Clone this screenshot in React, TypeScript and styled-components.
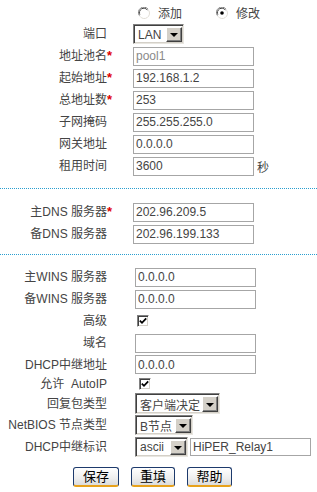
import { createGlobalStyle } from 'styled-components';
import styled from 'styled-components';

const GlobalStyle = createGlobalStyle`
  body {
    margin: 0;
    background: #fff;
    font-family: 'Liberation Sans', 'Noto Sans CJK SC', sans-serif;
    font-size: 12px;
    color: #444;
  }
`;

const Page = styled.div`
  width: 317px;
  padding-top: 2px;
`;

const Section = styled.div<{ $pt?: number }>`
  padding-top: ${(p) => p.$pt ?? 0}px;
`;

const Divider = styled.div<{ $mt: number }>`
  margin-top: ${(p) => p.$mt}px;
  border-top: 1px dotted #2a9fd0;
`;

const Row = styled.div<{ $h?: number; $mark?: number }>`
  display: grid;
  grid-template-columns: 107px ${(p) => p.$mark ?? 26}px auto;
  align-items: center;
  height: ${(p) => p.$h ?? 22}px;
`;

const Label = styled.div`
  text-align: right;
  white-space: nowrap;
  color: #444;
  line-height: 14px;
`;

const Mark = styled.span`
  color: #e00000;
  font-weight: bold;
  font-size: 13px;
  line-height: 12px;
  align-self: center;
`;

const Control = styled.div<{ $ml?: number }>`
  display: flex;
  align-items: center;
  gap: 3px;
  margin-left: ${(p) => p.$ml ?? 0}px;
`;

const TextBox = styled.input<{ $h?: number; $muted?: boolean }>`
  box-sizing: border-box;
  width: 121px;
  height: ${(p) => p.$h ?? 19}px;
  margin: 0;
  padding: 0 2px;
  border: 1px solid #a6a6a6;
  font-family: 'Liberation Sans', 'Noto Sans CJK SC', sans-serif;
  font-size: 12px;
  color: ${(p) => (p.$muted ? '#8a8a8a' : '#444')};
  outline: none;
`;

const Unit = styled.span`
  color: #444;
`;

const RadioRow = styled.div`
  display: flex;
  align-items: center;
  height: 21px;
  padding-left: 138px;
`;

const RadioItem = styled.label<{ $w: number }>`
  display: flex;
  align-items: center;
  gap: 8px;
  width: ${(p) => p.$w}px;
  color: #444;
`;

const Select = styled.div<{ $w: number; $h?: number }>`
  box-sizing: border-box;
  display: flex;
  align-items: stretch;
  width: ${(p) => p.$w}px;
  height: ${(p) => p.$h ?? 20}px;
  border-top: 1px solid #808080;
  border-left: 1px solid #808080;
  border-right: 1px solid #e8e6e0;
  border-bottom: 1px solid #e8e6e0;
  box-shadow: inset 1px 1px 0 #404040, inset -1px -1px 0 #d4d0c8;
  background: #fff;
  padding: 2px 1px 1px 2px;
`;

const SelectText = styled.span`
  flex: 1;
  display: flex;
  align-items: center;
  padding-left: 2px;
  color: #444;
  font-size: 12px;
  white-space: nowrap;
  overflow: hidden;
`;

const SelectArrow = styled.span`
  box-sizing: border-box;
  display: flex;
  align-items: center;
  justify-content: center;
  width: 16px;
  background: #d4d0c8;
  border-top: 1px solid #fff;
  border-left: 1px solid #fff;
  border-right: 1px solid #404040;
  border-bottom: 1px solid #404040;
  box-shadow: inset -1px -1px 0 #808080;

  &::after {
    content: '';
    border-left: 4px solid transparent;
    border-right: 4px solid transparent;
    border-top: 4px solid #000;
    margin-top: 1px;
  }
`;

const CheckBox = styled.span`
  box-sizing: border-box;
  display: inline-flex;
  align-items: center;
  justify-content: center;
  width: 12px;
  height: 12px;
  border-top: 1px solid #808080;
  border-left: 1px solid #808080;
  border-right: 1px solid #fff;
  border-bottom: 1px solid #fff;
  box-shadow: inset 1px 1px 0 #404040, inset -1px -1px 0 #d4d0c8;
  background: #fff;
`;

const Buttons = styled.div`
  display: flex;
  gap: 12px;
  padding-left: 73px;
  margin-top: 9px;
`;

const Button = styled.button<{ $w: number }>`
  box-sizing: border-box;
  width: ${(p) => p.$w}px;
  height: 20px;
  padding: 0;
  border: 1px solid #1d3a6c;
  border-bottom: 2px solid #e8a21c;
  border-radius: 3px;
  background: linear-gradient(#ffffff, #eeeeee 60%, #dcdcdc);
  font-family: 'Liberation Sans', 'Noto Sans CJK SC', sans-serif;
  font-size: 13px;
  color: #000;
  line-height: 16px;
`;

const Radio = ({ checked }: { checked?: boolean }) => (
  <svg width="12" height="12" viewBox="0 0 12 12">
    <path d="M10.2 2.4 A5.2 5.2 0 0 0 1.4 8.6" stroke="#808080" fill="none" />
    <path d="M9.4 3.2 A4.2 4.2 0 0 0 2.2 7.8" stroke="#404040" fill="none" />
    <circle cx="6" cy="6" r="3.8" fill="#fff" />
    <path d="M1.8 9.2 A5.2 5.2 0 0 0 10.6 3.2" stroke="#e0ddd6" fill="none" />
    {checked && <circle cx="6" cy="6" r="1.8" fill="#000" />}
  </svg>
);

const Check = () => (
  <CheckBox>
    <svg width="8" height="8" viewBox="0 0 8 8">
      <path d="M0.8 3.6 L3 5.8 L7.2 1.4" stroke="#000" strokeWidth="1.8" fill="none" />
    </svg>
  </CheckBox>
);

const Drop = ({ value, w, h }: { value: string; w: number; h?: number }) => (
  <Select $w={w} $h={h}>
    <SelectText>{value}</SelectText>
    <SelectArrow />
  </Select>
);

export default function App() {
  return (
    <Page>
      <GlobalStyle />
      <Section>
        <RadioRow>
          <RadioItem $w={78}>
            <Radio />
            添加
          </RadioItem>
          <RadioItem $w={60}>
            <Radio checked />
            修改
          </RadioItem>
        </RadioRow>
        <Row>
          <Label>端口</Label>
          <span />
          <Drop value="LAN" w={51} />
        </Row>
        <Row>
          <Label>地址池名</Label>
          <Mark>*</Mark>
          <TextBox readOnly $muted defaultValue="pool1" />
        </Row>
        <Row>
          <Label>起始地址</Label>
          <Mark>*</Mark>
          <TextBox defaultValue="192.168.1.2" />
        </Row>
        <Row>
          <Label>总地址数</Label>
          <Mark>*</Mark>
          <TextBox defaultValue="253" />
        </Row>
        <Row>
          <Label>子网掩码</Label>
          <span />
          <TextBox defaultValue="255.255.255.0" />
        </Row>
        <Row>
          <Label>网关地址</Label>
          <span />
          <TextBox defaultValue="0.0.0.0" />
        </Row>
        <Row>
          <Label>租用时间</Label>
          <span />
          <Control>
            <TextBox defaultValue="3600" />
            <Unit>秒</Unit>
          </Control>
        </Row>
      </Section>

      <Divider $mt={11} />

      <Section $pt={12}>
        <Row>
          <Label>主DNS 服务器</Label>
          <Mark>*</Mark>
          <TextBox defaultValue="202.96.209.5" />
        </Row>
        <Row>
          <Label>备DNS 服务器</Label>
          <span />
          <TextBox defaultValue="202.96.199.133" />
        </Row>
      </Section>

      <Divider $mt={9} />

      <Section $pt={11}>
        <Row $mark={28}>
          <Label>主WINS 服务器</Label>
          <span />
          <TextBox defaultValue="0.0.0.0" />
        </Row>
        <Row $mark={28}>
          <Label>备WINS 服务器</Label>
          <span />
          <TextBox defaultValue="0.0.0.0" />
        </Row>
        <Row $mark={28}>
          <Label>高级</Label>
          <span />
          <Control $ml={2}>
            <Check />
          </Control>
        </Row>
        <Row $mark={28}>
          <Label>域名</Label>
          <span />
          <TextBox defaultValue="" />
        </Row>
        <Row $mark={28} $h={21}>
          <Label>DHCP中继地址</Label>
          <span />
          <TextBox defaultValue="0.0.0.0" />
        </Row>
        <Row $mark={28} $h={18}>
          <Label>允许&nbsp; AutoIP</Label>
          <span />
          <Control $ml={4}>
            <Check />
          </Control>
        </Row>
        <Row $mark={28} $h={21}>
          <Label>回复包类型</Label>
          <span />
          <Drop value="客户端决定" w={85} h={21} />
        </Row>
        <Row $mark={28} $h={21}>
          <Label>NetBIOS 节点类型</Label>
          <span />
          <Drop value="B节点" w={58} />
        </Row>
        <Row $mark={28} $h={23}>
          <Label>DHCP中继标识</Label>
          <span />
          <Control $ml={0}>
            <Drop value="ascii" w={53} />
            <TextBox $h={18} defaultValue="HiPER_Relay1" style={{ marginLeft: -1 }} />
          </Control>
        </Row>
      </Section>

      <Buttons>
        <Button $w={46}>保存</Button>
        <Button $w={44}>重填</Button>
        <Button $w={45}>帮助</Button>
      </Buttons>
    </Page>
  );
}
